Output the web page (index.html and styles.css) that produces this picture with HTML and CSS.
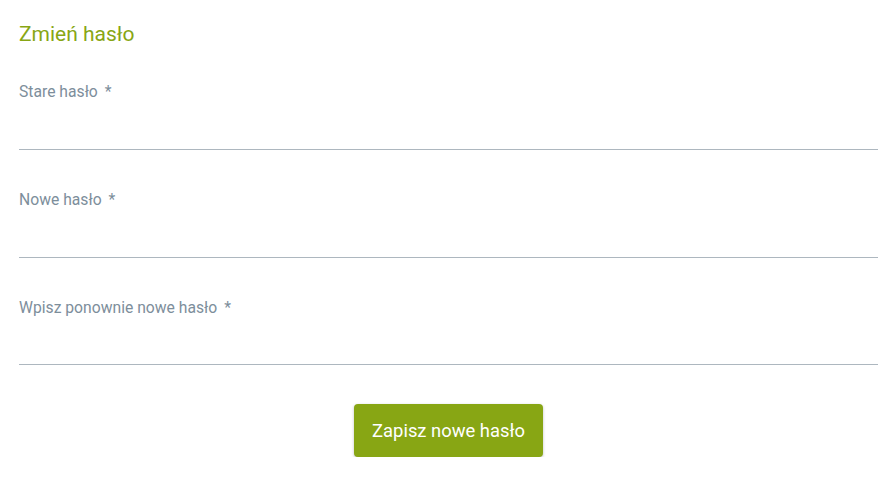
FILE: index.html
```html
<!DOCTYPE html>
<html lang="pl">
<head>
<meta charset="utf-8">
<title>Zmień hasło</title>
<link rel="stylesheet" href="styles.css">
</head>
<body>
<form class="page">
  <h2 class="title">Zmień hasło</h2>
  <div class="field">
    <label class="label">Stare hasło <span class="req">*</span></label>
    <input class="input" type="password">
  </div>
  <div class="field">
    <label class="label">Nowe hasło <span class="req">*</span></label>
    <input class="input" type="password">
  </div>
  <div class="field field-last">
    <label class="label">Wpisz ponownie nowe hasło <span class="req">*</span></label>
    <input class="input" type="password">
  </div>
  <div class="actions">
    <button class="btn" type="button">Zapisz nowe hasło</button>
  </div>
</form>
</body>
</html>
```
FILE: styles.css
```css
html, body {
  margin: 0;
  padding: 0;
  background: #ffffff;
}
body {
  font-family: Roboto, "Liberation Sans", Arial, sans-serif;
}
.page {
  display: flex;
  flex-direction: column;
  padding: 22px 18px 0 19px;
}
.title {
  margin: 0 0 35px 0;
  font-size: 21px;
  line-height: 24px;
  font-weight: 400;
  color: #88a614;
}
.field {
  display: flex;
  flex-direction: column;
  margin-bottom: 39px;
}
.field-last .input {
  height: 46px;
}
.label {
  padding-top: 1px;
  font-size: 15.7px;
  line-height: 20px;
  color: #7d8e9b;
}
.req {
  margin-left: 3px;
}
.input {
  height: 47px;
  border: none;
  border-bottom: 1px solid #adb7bf;
  padding: 0;
  margin: 0;
  outline: none;
  background: transparent;
  box-sizing: content-box;
}
.actions {
  display: flex;
  justify-content: center;
}
.btn {
  width: 189px;
  height: 53px;
  border: none;
  border-radius: 4px;
  background: #88a614;
  color: #ffffff;
  font-family: Roboto, "Liberation Sans", Arial, sans-serif;
  font-size: 18.4px;
  box-shadow: 0 1px 3px rgba(0,0,0,0.25);
  cursor: pointer;
}
```
